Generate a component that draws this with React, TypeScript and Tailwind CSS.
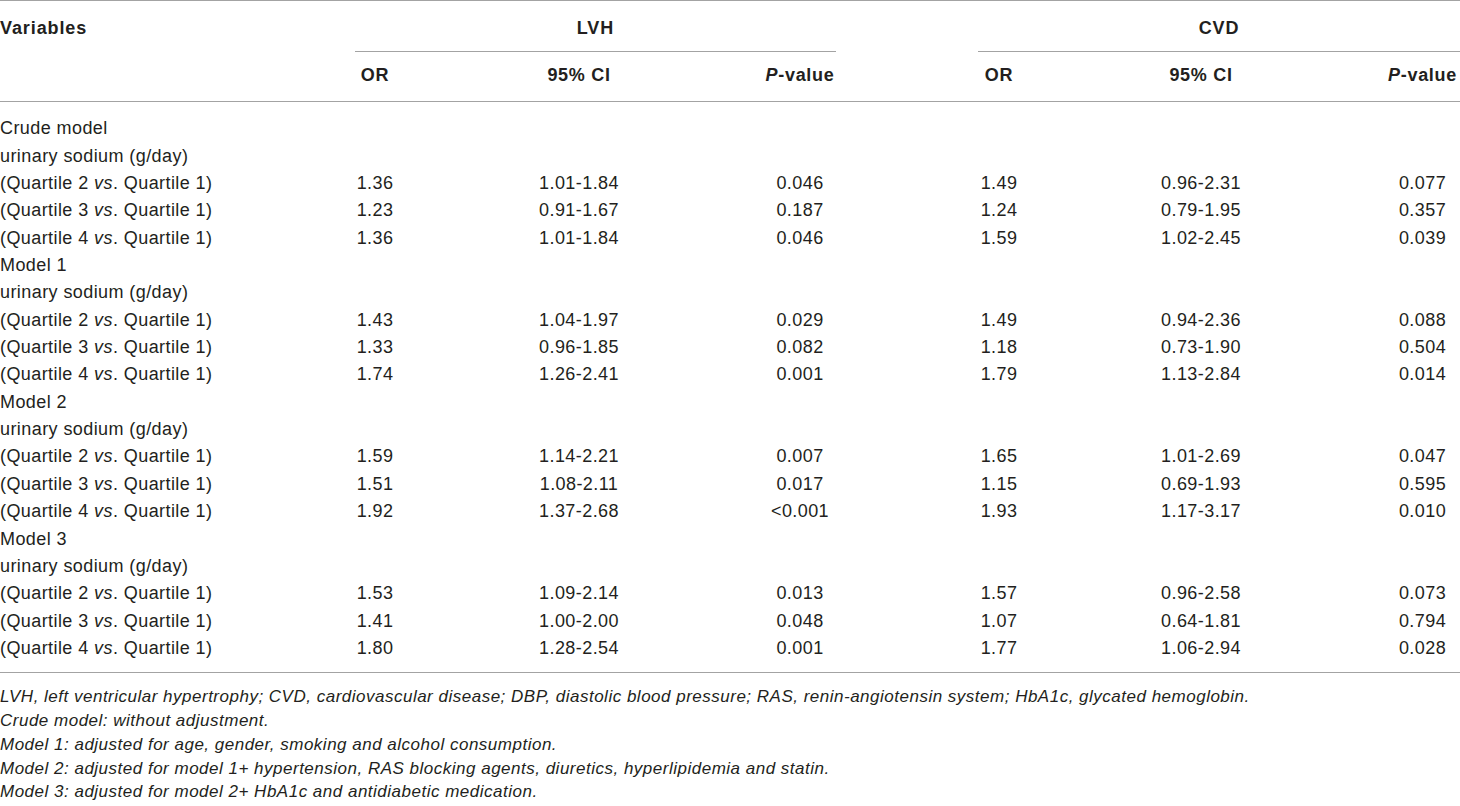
import React from "react";

type Row = { label: React.ReactNode; v?: string[] };

const q = (n: number) => (
  <>
    (Quartile {n} <i>vs</i>. Quartile 1)
  </>
);

const rows: Row[] = [
  { label: "Crude model" },
  { label: "urinary sodium (g/day)" },
  { label: q(2), v: ["1.36", "1.01-1.84", "0.046", "1.49", "0.96-2.31", "0.077"] },
  { label: q(3), v: ["1.23", "0.91-1.67", "0.187", "1.24", "0.79-1.95", "0.357"] },
  { label: q(4), v: ["1.36", "1.01-1.84", "0.046", "1.59", "1.02-2.45", "0.039"] },
  { label: "Model 1" },
  { label: "urinary sodium (g/day)" },
  { label: q(2), v: ["1.43", "1.04-1.97", "0.029", "1.49", "0.94-2.36", "0.088"] },
  { label: q(3), v: ["1.33", "0.96-1.85", "0.082", "1.18", "0.73-1.90", "0.504"] },
  { label: q(4), v: ["1.74", "1.26-2.41", "0.001", "1.79", "1.13-2.84", "0.014"] },
  { label: "Model 2" },
  { label: "urinary sodium (g/day)" },
  { label: q(2), v: ["1.59", "1.14-2.21", "0.007", "1.65", "1.01-2.69", "0.047"] },
  { label: q(3), v: ["1.51", "1.08-2.11", "0.017", "1.15", "0.69-1.93", "0.595"] },
  { label: q(4), v: ["1.92", "1.37-2.68", "<0.001", "1.93", "1.17-3.17", "0.010"] },
  { label: "Model 3" },
  { label: "urinary sodium (g/day)" },
  { label: q(2), v: ["1.53", "1.09-2.14", "0.013", "1.57", "0.96-2.58", "0.073"] },
  { label: q(3), v: ["1.41", "1.00-2.00", "0.048", "1.07", "0.64-1.81", "0.794"] },
  { label: q(4), v: ["1.80", "1.28-2.54", "0.001", "1.77", "1.06-2.94", "0.028"] },
];

// column cells: margin-left + width, centred text
const colCls = [
  "ml-0 w-[80px]", // OR LVH, centre 375 (335-415)
  "ml-[104px] w-[120px]", // CI LVH, centre 579 (519-639)
  "ml-[125px] w-[72px]", // P LVH, centre 800 (764-836)
  "ml-[123px] w-[80px]", // OR CVD, centre 999 (959-1039)
  "ml-[102px] w-[120px]", // CI CVD, centre 1201 (1141-1261)
  "ml-[124px] w-[75px]", // P CVD, centre 1422 (1385-1460)
];

const headers: React.ReactNode[] = [
  "OR",
  "95% CI",
  <>
    <i>P</i>-value
  </>,
  "OR",
  "95% CI",
  <>
    <i>P</i>-value
  </>,
];

export default function App() {
  return (
    <div
      className="w-[1460px] h-[806px] bg-white text-[#231f20] overflow-hidden"
      style={{ fontFamily: '"Liberation Sans", Arial, sans-serif' }}
    >
      {/* header */}
      <div className="border-t border-[#a3a3a3]">
        <div className="flex h-[50px] items-start pt-[16px] font-bold text-[18px] tracking-[0.9px] leading-[22px]">
          <div className="w-[355px]">Variables</div>
          <div className="w-[481px] text-center">LVH</div>
          <div className="w-[142px]" />
          <div className="w-[482px] text-center">CVD</div>
        </div>
        <div className="flex">
          <div className="w-[355px]" />
          <div className="w-[481px] border-t border-[#a3a3a3]" />
          <div className="w-[142px]" />
          <div className="w-[482px] border-t border-[#a3a3a3]" />
        </div>
        <div className="flex h-[49px] items-center font-bold text-[18px] tracking-[0.7px] pb-[2px]">
          <div className="w-[335px]" />
          {headers.map((h, i) => (
            <div key={i} className={`${colCls[i]} text-center whitespace-nowrap`}>
              {h}
            </div>
          ))}
        </div>
      </div>

      {/* body */}
      <div className="border-t border-b border-[#a3a3a3] pt-[13px] pb-[10px] text-[18px] tracking-[0.42px]">
        {rows.map((r, i) => (
          <div key={i} className="flex h-[27.37px] items-center whitespace-nowrap">
            <div className="w-[335px]">{r.label}</div>
            {r.v &&
              r.v.map((v, j) => (
                <div key={j} className={`${colCls[j]} text-center`}>
                  {v}
                </div>
              ))}
          </div>
        ))}
      </div>

      {/* footnotes */}
      <div className="pt-[12px] italic text-[17px] tracking-[0.5px] leading-[23.8px] whitespace-nowrap">
        <div>
          LVH, left ventricular hypertrophy; CVD, cardiovascular disease; DBP, diastolic blood pressure; RAS,
          renin-angiotensin system; HbA1c, glycated hemoglobin.
        </div>
        <div>Crude model: without adjustment.</div>
        <div>Model 1: adjusted for age, gender, smoking and alcohol consumption.</div>
        <div>
          Model 2: adjusted for model 1+ hypertension, RAS blocking agents, diuretics, hyperlipidemia and statin.
        </div>
        <div>Model 3: adjusted for model 2+ HbA1c and antidiabetic medication.</div>
      </div>
    </div>
  );
}
